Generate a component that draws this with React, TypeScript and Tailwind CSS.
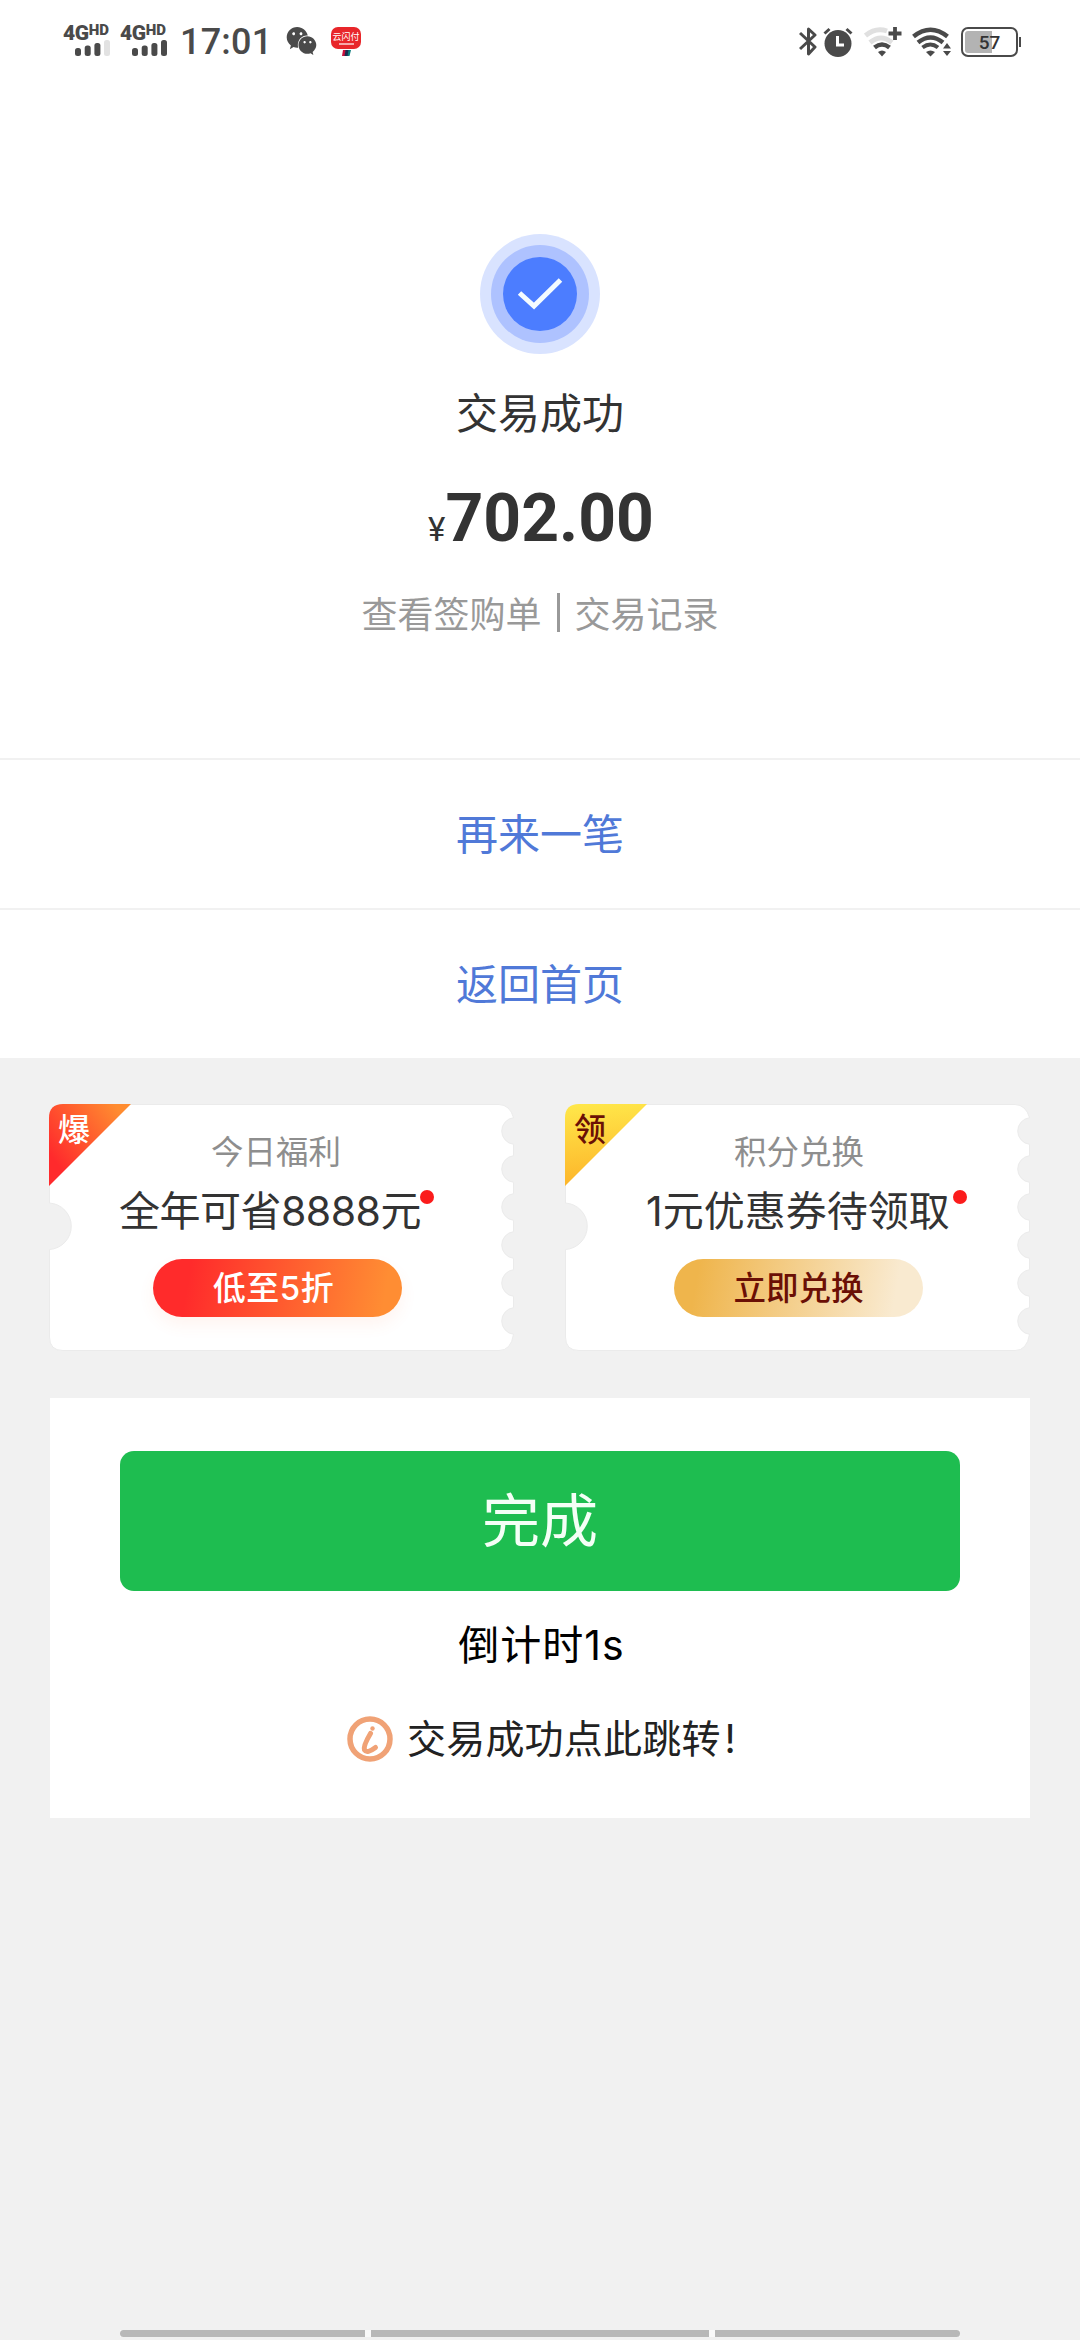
import { FaWeixin } from "react-icons/fa";

const Signal = ({ last }: { last: string }) => (
  <div className="flex w-[47px] flex-col">
    <div className="flex h-[15px] items-start font-black leading-[16px] text-[#4a4a4a]">
      <span className="text-[21px] tracking-[-0.4px]">4G</span>
      <span className="text-[15px] leading-[11px]">HD</span>
    </div>
    <svg className="ml-3" width="36" height="16" viewBox="0 0 36 16">
      <rect x="0" y="8" width="6" height="8" rx="2.5" fill="#4a4a4a" />
      <rect x="9.7" y="5.5" width="6" height="10.5" rx="2.5" fill="#4a4a4a" />
      <rect x="19.4" y="3" width="6" height="13" rx="2.5" fill="#4a4a4a" />
      <rect x="29" y="0" width="6" height="16" rx="2.5" fill={last} />
    </svg>
  </div>
);

const StatusBar = () => (
  <header className="flex h-[84px] items-start pl-[63px] pt-[25px] font-['Roboto',sans-serif]">
    <Signal last="#e2e2e2" />
    <div className="w-[10px]" />
    <Signal last="#4a4a4a" />
    <span className="ml-[13px] w-[106px] text-[36px] font-medium leading-[34px] tracking-[0.2px] text-[#4a4a4a]">
      17:01
    </span>
    <FaWeixin className="h-[32px] w-[31px] text-[#4a4a4a]" preserveAspectRatio="none" />
    {/* UnionPay notification */}
    <div className="ml-[14px] mt-[2px] flex w-[30px] flex-col items-center">
      <div className="flex h-[22px] w-[30px] flex-col items-center justify-center rounded-[7px] bg-[#e8262a] font-['Noto_Sans_CJK_SC',sans-serif] text-white">
        <span className="text-[9px] leading-[10px]">云闪付</span>
        <span className="mt-px h-[2px] w-[15px] bg-white/60" />
      </div>
      <svg width="9" height="6" viewBox="0 0 9 6" className="mt-px">
        <path d="M1 0h3L3.500 6H0z" fill="#c8103c" />
        <path d="M3.500 0h4L6 6H2.500z" fill="#1d2c50" />
        <path d="M6.500 0H9L7.500 6H5.500z" fill="#0a7c7c" />
      </svg>
    </div>

    <div className="ml-auto mr-[59px] mt-[2px] flex items-start">
      <svg width="18" height="29" viewBox="0 0 18 29" fill="none" stroke="#4a4a4a" strokeWidth="3">
        <path d="M1 6l15 14-6.500 7V2L16 8 1 22" strokeLinejoin="round" />
      </svg>
      <svg className="ml-[6px]" width="30" height="30" viewBox="0 0 30 30">
        <circle cx="15" cy="16.500" r="13.500" fill="#4a4a4a" />
        <path d="M1.500 6.500L6.500 2M28.500 6.500L23.500 2" stroke="#4a4a4a" strokeWidth="3" />
        <path d="M14.500 9v9H21" stroke="#fff" strokeWidth="3" fill="none" />
      </svg>
      <svg className="ml-[11px]" width="38" height="30" viewBox="0 0 38 30" fill="none">
        <path d="M1.500 8.500Q12 0 23 4M6 15.500Q17 6.500 28 15.500" stroke="#e0e0e0" strokeWidth="5" />
        <path d="M10.500 20.500Q18 14.500 25.500 20.500" stroke="#4a4a4a" strokeWidth="4.500" />
        <path d="M14 25q4-3 8 0l-4 4.500z" fill="#4a4a4a" />
        <path d="M31 0v13M24.500 6.500h13" stroke="#4a4a4a" strokeWidth="3.800" />
      </svg>
      <svg className="ml-[10px]" width="40" height="30" viewBox="0 0 40 30" fill="none" stroke="#4a4a4a">
        <path d="M1.500 9.500Q18.500-4 35.500 9.500" strokeWidth="4.500" />
        <path d="M6 15.500Q18.500 5.500 31 15.500" strokeWidth="4.500" />
        <path d="M10.500 20.500Q18.500 14.500 26 20.500" strokeWidth="4" />
        <path d="M14 25q4.500-3 9 0l-4.500 4.500z" fill="#4a4a4a" stroke="none" />
        <path d="M31 21.500l4-5.500 4 5.500zM31 24h8l-4 5z" fill="#4a4a4a" stroke="none" />
      </svg>
      <div className="ml-[9px] flex h-[30px] w-[57px] items-center rounded-[7px] border-2 border-[#4a4a4a] p-[2px]">
        <div className="flex h-full w-full items-center justify-center rounded-[3px] bg-[linear-gradient(90deg,#b3b3b3_56%,#fff_56%)] text-[19px] font-medium leading-none text-[#333]">
          57
        </div>
      </div>
      <div className="ml-px mt-[10px] h-[10px] w-[2px] bg-[#4a4a4a]" />
    </div>
  </header>
);

interface CouponProps {
  tag: string;
  tagFrom: string;
  tagTo: string;
  tagColor: string;
  vertical?: boolean;
  label: string;
  title: string;
  action: string;
  labelClass: string;
  titleClass: string;
  dotClass: string;
  buttonClass: string;
}

const Coupon = (c: CouponProps) => (
  <div className="relative h-[247px] w-[465px]">
    {/* Ticket shape */}
    <svg className="absolute inset-0" width="465" height="247" viewBox="0 0 465 247">
      <defs>
        <linearGradient id={c.tag} x1="0" y1={c.vertical ? "0" : "0.6"} x2={c.vertical ? "0.1" : "0.8"} y2={c.vertical ? "1" : "0"}>
          <stop offset="0" stopColor={c.tagFrom} />
          <stop offset="1" stopColor={c.tagTo} />
        </linearGradient>
      </defs>
      <path
        d="M14 .5H450Q461 1 464.500 13.700a13.400 13.400 0 0 0 0 26.600v11.400a13.400 13.400 0 0 0 0 26.600v11.400a13.400 13.400 0 0 0 0 26.600v11.400a13.400 13.400 0 0 0 0 26.600v11.400a13.400 13.400 0 0 0 0 26.600v11.400a13.400 13.400 0 0 0 0 26.600Q462 246.500 450 246.500H14Q.5 246.500.5 233V145.500a23.300 23.300 0 0 0 0-46.500V14Q.5.5 14 .5z"
        fill="#fff"
        stroke="#ebebeb"
      />
      <path d="M14 0H82L0 82V14Q0 0 14 0z" fill={`url(#${c.tag})`} />
    </svg>
    <span className={`absolute left-[9px] top-[10px] text-[32px] font-medium leading-8 ${c.tagColor}`}>
      {c.tag}
    </span>
    <div className={`relative pt-[29px] text-[32.500px] leading-[40px] text-[#8e8e8e] ${c.labelClass}`}>{c.label}</div>
    <div className={`relative mt-[10px] whitespace-nowrap leading-[56px] text-[#333] ${c.titleClass}`}>
      {c.title}
      <span className={`absolute top-[7px] size-[14px] rounded-full bg-[#fb1c1c] ${c.dotClass}`} />
    </div>
    <div className={`relative mt-[20px] flex h-[58px] w-[249px] items-center justify-center rounded-full pt-[2px] font-medium ${c.buttonClass}`}>
      {c.action}
    </div>
  </div>
);

const App = () => {
  return (
    <div className="flex h-[2340px] w-[1080px] flex-col overflow-hidden bg-[#f1f1f1] font-['Inter','Noto_Sans_CJK_SC',sans-serif]">
      <div className="bg-white">
        <StatusBar />

        {/* Transaction result */}
        <section className="flex h-[674px] flex-col items-center pt-[150px] font-['Noto_Sans_CJK_SC',sans-serif]">
          <svg width="120" height="120" viewBox="0 0 120 120">
            <circle cx="60" cy="60" r="60" fill="#d9e3ff" />
            <circle cx="60" cy="60" r="49" fill="#aec2ff" />
            <circle cx="60" cy="60" r="37" fill="#4c7dff" />
            <path d="M39.500 59l14.500 13 26.500-26" fill="none" stroke="#f4fbff" strokeWidth="5" />
          </svg>
          <h1 className="mt-[27px] text-[42px] leading-[60px] text-[#333]">交易成功</h1>
          <div className="ml-[2px] mt-[38px] flex items-baseline font-['Roboto',sans-serif] leading-[80px] text-[#333]">
            <span className="text-[33px]">¥</span>
            <span className="text-[66px] font-bold">702.00</span>
          </div>
          <div className="mt-[17px] flex h-[50px] items-center text-[36px] leading-[50px] text-[#999]">
            <span>查看签购单</span>
            <span className="mx-[15px] h-[39px] w-[3px] bg-[#999]" />
            <span>交易记录</span>
          </div>
        </section>

        <button className="flex h-[150px] w-full items-center justify-center border-t-2 border-[#f1f1f1] text-[42px] text-[#5079d8]">
          再来一笔
        </button>
        <button className="flex h-[150px] w-full items-center justify-center border-t-2 border-[#f1f1f1] text-[42px] text-[#5079d8]">
          返回首页
        </button>
      </div>

      {/* Coupons */}
      <section className="mt-[46px] flex justify-between pl-[49px] pr-[50px]">
        <Coupon
          tag="爆"
          tagFrom="#ff2a2c"
          tagTo="#ff8c30"
          tagColor="text-white"
          label="今日福利"
          title="全年可省8888元"
          action="低至5折"
          labelClass="pl-[162px]"
          titleClass="pl-[70px] text-[41px] tracking-[-0.5px]"
          dotClass="left-[371px]"
          buttonClass="ml-[104px] bg-[linear-gradient(100deg,#ff2b2b_15%,#ff8d33_92%)] pr-2 text-[33px] tracking-[0.5px] text-white shadow-[0_8px_16px_rgba(255,120,60,0.08)]"
        />
        <Coupon
          tag="领"
          tagFrom="#ffe84a"
          tagTo="#fdb52a"
          tagColor="text-[#6b0f05]"
          vertical
          label="积分兑换"
          title="1元优惠券待领取"
          action="立即兑换"
          labelClass="pl-[169px]"
          titleClass="pl-[81px] text-[41px]"
          dotClass="left-[388px]"
          buttonClass="ml-[109px] bg-[linear-gradient(100deg,#efb54c_10%,#f9ead0_88%)] text-[32.500px] text-[#6b0f05]"
        />
      </section>

      <section className="mx-[50px] mt-[47px] flex h-[420px] flex-col items-center bg-white pt-[53px]">
        <button className="flex h-[140px] w-[840px] items-center justify-center rounded-[14px] bg-[#1ebd50] text-[58px] text-[#f4fff6]">
          完成
        </button>
        <p className="mt-[24px] pl-[3px] text-[41px] leading-[60px] tracking-[1px] text-black">倒计时1s</p>
        <div className="mt-[34px] flex h-[60px] items-center pl-[3px] text-[39px] tracking-[0.2px] text-[#222]">
          <svg className="mr-[14px]" width="46" height="46" viewBox="0 0 46 46" fill="none" stroke="#f0a276">
            <circle cx="23" cy="23" r="20" strokeWidth="5.500" />
            <circle cx="25.500" cy="12.500" r="2.200" fill="#f0a276" stroke="none" />
            <path d="M23.500 17.500Q16 30 17.500 34Q20 38 28.500 31.500" strokeWidth="5" strokeLinecap="round" />
          </svg>
          <span>交易成功点此跳转</span>
          <span className="ml-[4px]">!</span>
        </div>
      </section>

      {/* Gesture bar */}
      <div className="mx-[120px] mb-[3px] mt-auto flex h-[7px] gap-[6px] bg-[#fafafa]">
        <div className="w-[245px] rounded-l-full bg-[#b8b8b8]" />
        <div className="w-[338px] bg-[#b8b8b8]" />
        <div className="w-[245px] rounded-r-full bg-[#b8b8b8]" />
      </div>
    </div>
  );
};

export default App;
